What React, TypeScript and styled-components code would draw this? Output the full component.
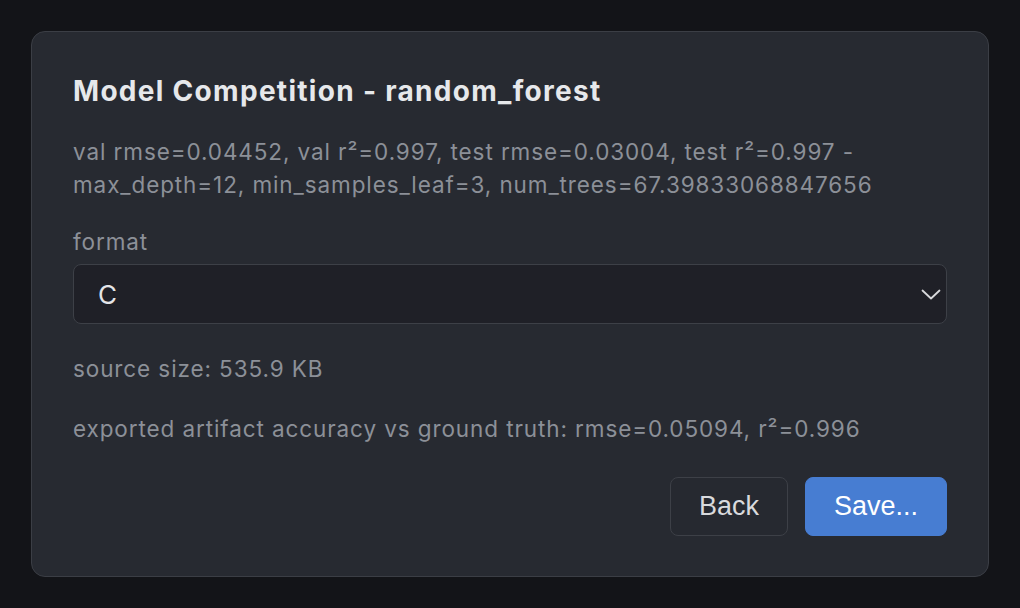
import styled, { createGlobalStyle } from 'styled-components';

const Global = createGlobalStyle`
  html, body {
    margin: 0;
    padding: 0;
    background: #131418;
  }
  body {
    font-family: Inter, "Noto Sans", sans-serif;
  }
`;

const Page = styled.div`
  box-sizing: border-box;
  width: 1020px;
  height: 608px;
  padding: 31px 31px 0 31px;
`;

const Card = styled.div`
  box-sizing: border-box;
  width: 958px;
  height: 546px;
  background: #272a31;
  border: 1.5px solid #3b3e45;
  border-radius: 14px;
  padding: 41px 41px 0 41px;
  display: flex;
  flex-direction: column;
`;

const Title = styled.h2`
  margin: 0;
  color: #e6e8eb;
  font-size: 28px;
  font-weight: 700;
  line-height: 36px;
  letter-spacing: 1.3px;
`;

const Info = styled.p<{ $top: number }>`
  margin: ${(p) => p.$top}px 0 0 0;
  color: #8c9098;
  font-size: 22.5px;
  line-height: 33px;
  letter-spacing: 0.9px;
`;

const Label = styled.label`
  display: block;
  margin-top: 26px;
  color: #8c9098;
  font-size: 22.5px;
  line-height: 30px;
  letter-spacing: 0.9px;
`;

const SelectBox = styled.div`
  box-sizing: border-box;
  margin-top: 7px;
  height: 60px;
  background: #1f2027;
  border: 1.5px solid #3d4047;
  border-radius: 8px;
  display: flex;
  align-items: center;
  justify-content: space-between;
  padding: 0 5px 0 24px;
  color: #e4e5e8;
  font-size: 26px;
`;

const Actions = styled.div`
  margin-top: 32px;
  display: flex;
  justify-content: flex-end;
  gap: 17px;
`;

const Button = styled.button<{ $primary?: boolean }>`
  box-sizing: border-box;
  height: 59px;
  padding: 0 28px;
  border-radius: 8px;
  font-family: "Liberation Sans", Arial, sans-serif;
  font-size: 27px;
  cursor: pointer;
  color: ${(p) => (p.$primary ? '#ffffff' : '#d9dadd')};
  background: ${(p) => (p.$primary ? '#477dd2' : '#262930')};
  border: 1.5px solid ${(p) => (p.$primary ? '#477dd2' : '#3d4047')};
`;

export default function App() {
  return (
    <>
      <Global />
      <Page>
        <Card>
          <Title>Model Competition - random_forest</Title>
          <Info $top={26}>
            val rmse=0.04452, val r²=0.997, test rmse=0.03004, test r²=0.997 -<br />
            max_depth=12, min_samples_leaf=3, num_trees=67.39833068847656
          </Info>
          <Label>format</Label>
          <SelectBox>
            <span>C</span>
            <svg width="20" height="11" viewBox="0 0 20 11" fill="none" stroke="#d8d9dc" strokeWidth="1.8" strokeLinecap="round" strokeLinejoin="round">
              <path d="M1.5 1.5l8.5 8 8.5-8" />
            </svg>
          </SelectBox>
          <Info $top={28}>source size: 535.9 KB</Info>
          <Info $top={27}>exported artifact accuracy vs ground truth: rmse=0.05094, r²=0.996</Info>
          <Actions>
            <Button>Back</Button>
            <Button $primary>Save...</Button>
          </Actions>
        </Card>
      </Page>
    </>
  );
}
